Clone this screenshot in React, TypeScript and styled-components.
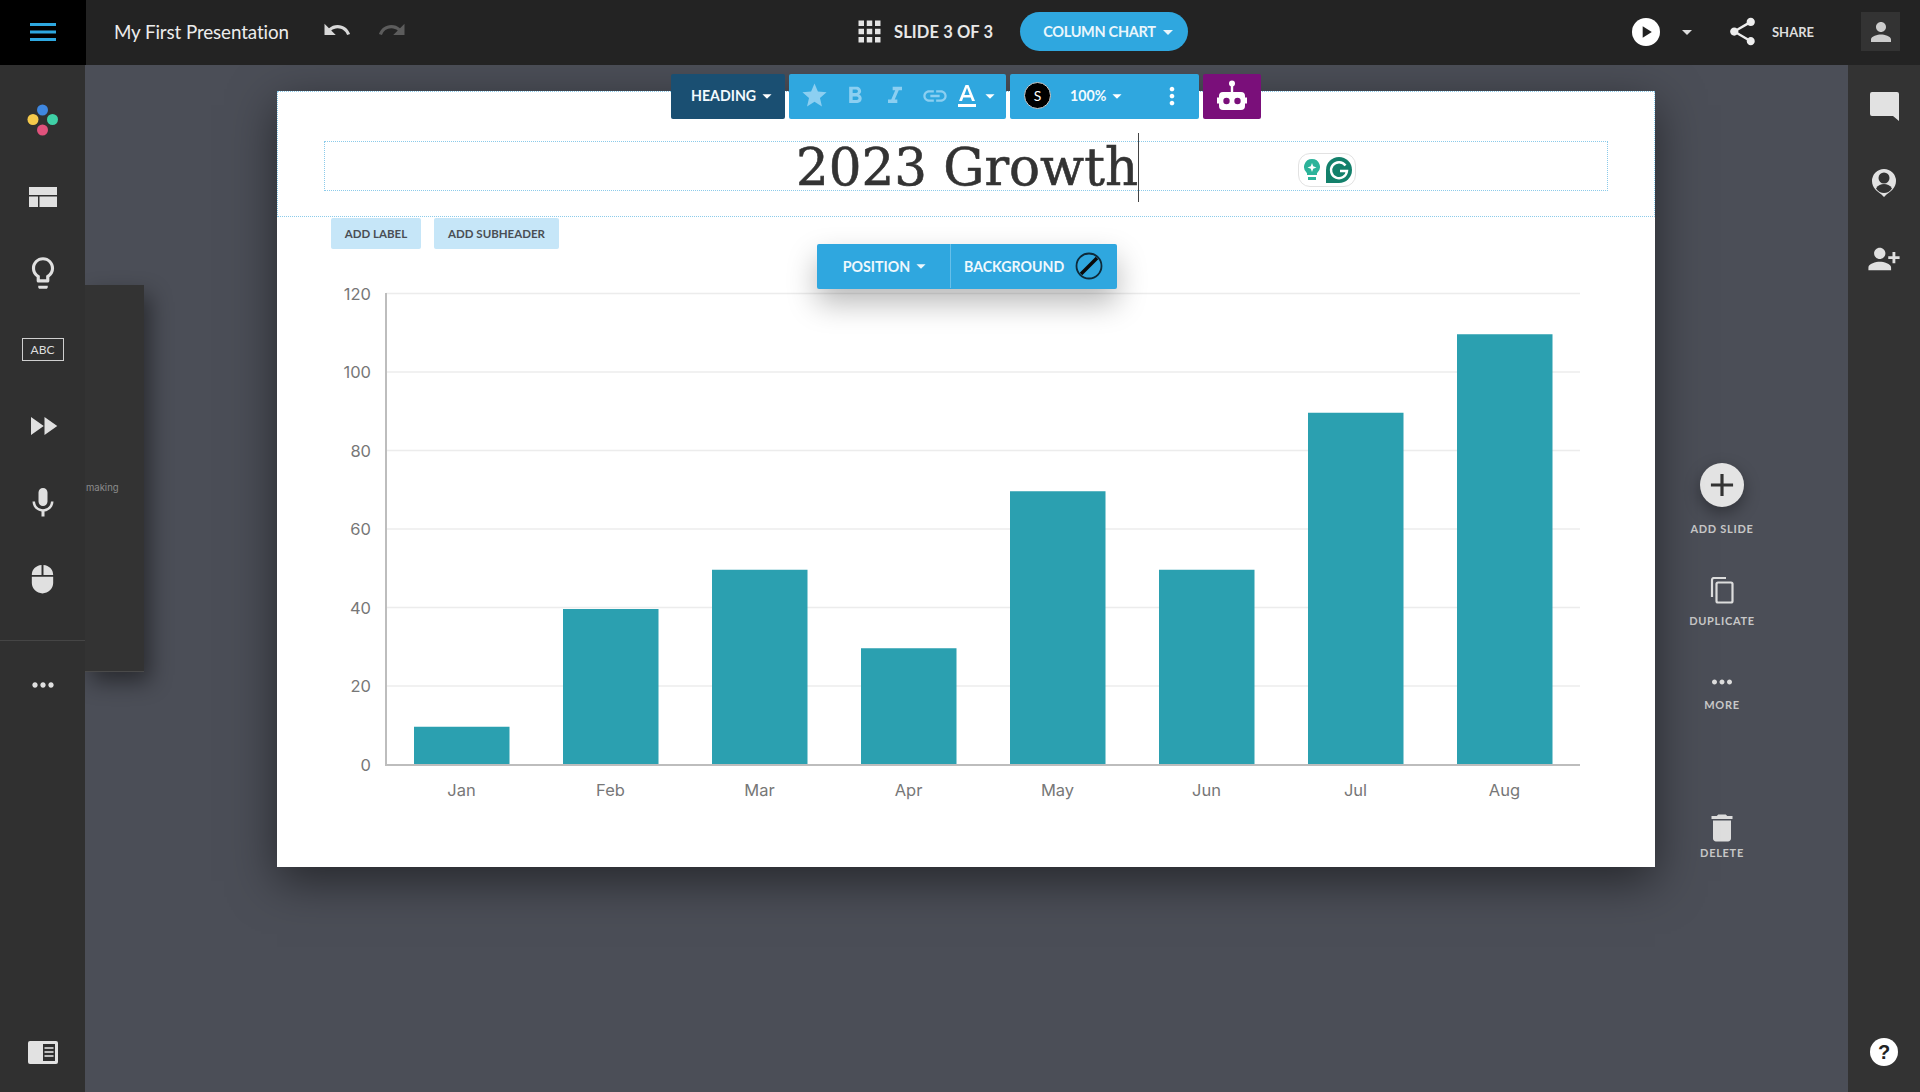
import React from "react";
import styled, { createGlobalStyle } from "styled-components";
import {
  MdUndo, MdRedo, MdApps, MdShare, MdPerson, MdPersonAdd, MdDelete, MdLightbulbOutline,
  MdFastForward, MdMic, MdMoreHoriz, MdAdd, MdStar, MdFormatBold, MdFormatItalic, MdLink,
  MdMoreVert, MdPlayArrow, MdArrowDropDown,
} from "react-icons/md";

const Global = createGlobalStyle`
  html, body { margin: 0; padding: 0; height: 100%; background: #4b4e57; }
  * { box-sizing: border-box; }
  #root { height: 100%; }
`;

const UI_FONT = `"Lato", "Noto Sans", sans-serif`;
const BLUE = "#2fa7df";
const DOTTED = "#8ccbea";

const Page = styled.div`
  width: 1920px; height: 1092px; overflow: hidden;
  display: grid; grid-template-rows: 65px 1fr; grid-template-columns: 86px 1fr 72px;
  font-family: ${UI_FONT}; background: #4b4e57;
`;

const Header = styled.header`
  grid-column: 1 / -1; display: grid; grid-template-columns: 853px auto 1fr;
  align-items: center; background: #232323; color: #fff; position: relative; z-index: 5;
`;
const HeaderLeft = styled.div` display: flex; align-items: center; height: 65px; `;
const BurgerCell = styled.div`
  width: 86px; height: 65px; background: #000; display: flex; align-items: center; justify-content: center; padding-bottom: 1px;
`;
const DocTitle = styled.div` font-size: 18.8px; margin: 0 0 2px 28px; color: #ececec; width: 208px; white-space: nowrap; letter-spacing: -.1px; `;
const HistoryIcon = styled.span<{ $off?: boolean }>`
  display: flex; margin-right: 25px; margin-bottom: 6px; font-size: 30px; color: ${p => (p.$off ? "#5c5c5c" : "#d8d8d8")};
`;
const HeaderCenter = styled.div` display: flex; align-items: center; margin-bottom: 2px; `;
const SlideCount = styled.div` font-size: 16.5px; font-weight: 700; margin: 0 27px 0 8px; color: #e8e8e8; white-space: nowrap; letter-spacing: .1px; `;
const GridIcon = styled.span` display: flex; font-size: 33px; color: #e4e4e4; `;
const Pill = styled.div`
  height: 39px; width: 168px; border-radius: 20px; background: ${BLUE}; display: flex; align-items: center;
  font-size: 14.5px; font-weight: 700; color: #eaf6fc; white-space: nowrap; padding-left: 23px; letter-spacing: -.3px;
`;
const HeaderRight = styled.div` display: flex; align-items: center; justify-content: flex-end; padding-right: 20px; margin-bottom: 2px; `;
const PlayButton = styled.div`
  width: 28px; height: 28px; border-radius: 50%; background: #fff; color: #222; display: flex; align-items: center; justify-content: center; font-size: 20px;
`;
const HeaderCaret = styled.span` display: flex; font-size: 24px; color: #ddd; margin: 0 27px 0 15px; `;
const ShareIcon = styled.span` display: flex; font-size: 33px; color: #eee; `;
const ShareLabel = styled.span` font-size: 13px; font-weight: 700; color: #ddd; margin: 0 47px 0 13px; `;
const UserBox = styled.div`
  width: 39px; height: 39px; background: #333; display: flex; align-items: center; justify-content: center; font-size: 30px; color: #ccc;
`;

const LeftBar = styled.nav`
  background: #303030; width: 85px; display: flex; flex-direction: column; align-items: stretch; padding-top: 17px; position: relative; z-index: 4;
`;
const RailItem = styled.div`
  height: 76.5px; display: flex; align-items: center; justify-content: center; color: #e0e0e0; font-size: 34px;
`;
const RailDivider = styled.div` height: 1px; background: #454545; margin-top: 22.5px; `;
const DotsItem = styled.div` height: 44px; margin-top: 22px; display: flex; align-items: center; justify-content: center; color: #e0e0e0; font-size: 32px; `;
const PanelToggle = styled.div` margin-top: auto; height: 51px; display: flex; align-items: flex-start; justify-content: center; `;
const AbcBox = styled.div`
  width: 42px; height: 23px; border: 1.5px solid #cfcfcf; font-size: 12px; color: #ddd; display: flex; align-items: center; justify-content: center; font-weight: 400;
`;

const Canvas = styled.main`
  position: relative; display: grid; grid-template-columns: 191px 1378px 134px; align-content: start; padding-top: 26px;
`;
const FlyPanel = styled.aside`
  position: absolute; left: -1px; top: 220px; width: 59px; height: 387px; background: #333; overflow: hidden; border-bottom: 1px solid #4a4a4a;
  box-shadow: 6px 10px 22px rgba(0,0,0,.45); padding-top: 197px; z-index: 3;
`;
const FlyText = styled.div` font-size: 9.5px; color: #8c8c8c; margin-left: 1px; font-family: "Inter", sans-serif; `;

const Slide = styled.section`
  grid-column: 2; width: 1378px; height: 776px; background: #fff; position: relative; display: flex; flex-direction: column;
  box-shadow: 0 14px 44px rgba(0,0,0,.5);
`;
const SlideHeader = styled.div`
  height: 126px; padding: 49px 46px 0; border: 1px dotted ${DOTTED};
`;
const TitleBox = styled.div`
  height: 50px; border: 1px dotted ${DOTTED}; display: flex; justify-content: center; align-items: center; position: relative;
`;
const TitleText = styled.h1`
  margin: 0 0 -1px 2px; position: relative; font-family: "DejaVu Serif", serif; font-weight: 400; font-size: 51.5px; color: #333; line-height: 50px; white-space: nowrap;
  -webkit-text-stroke: 0.6px #333;
`;
const Caret = styled.i` position: absolute; right: -1px; top: -9px; height: 69px; width: 1px; background: #444; `;
const GrammarlyBadge = styled.div`
  position: absolute; left: 973px; top: 11px; width: 58px; height: 34px; border: 1px solid #e2e2e2; border-radius: 12px; background: #fff;
  display: flex; align-items: center; justify-content: center; gap: 5px;
`;
const AddRow = styled.div` display: flex; gap: 13px; padding-left: 54px; height: 31px; margin-top: 1px; `;
const AddButton = styled.div<{ $w: number }>`
  width: ${p => p.$w}px; height: 31px; background: #c6e6f8; border-radius: 2px; display: flex; align-items: center; justify-content: center;
  font-size: 11.5px; font-weight: 700; color: #4a4f55; white-space: nowrap;
`;
const TextBar = styled.div`
  position: absolute; left: 394px; top: -17px; display: flex; gap: 4px; height: 45px; z-index: 2;
`;
const BarGroup = styled.div<{ $w: number; $bg?: string; $pl?: number }>`
  width: ${p => p.$w}px; height: 45px; background: ${p => p.$bg || BLUE}; border-radius: 2px; display: flex; align-items: center; color: #fff;
  font-size: 14.2px; font-weight: 700; white-space: nowrap; padding: 0 0 2px ${p => p.$pl || 0}px;
`;
const ToolIcon = styled.span<{ $dim?: boolean; $w?: number; $push?: boolean }>`
  display: flex; align-items: center; justify-content: center; width: ${p => p.$w || 40}px; font-size: 25px; color: ${p => (p.$dim ? "#8ccff1" : "#fff")};
  margin-left: ${p => (p.$push ? "auto" : "0")};
`;
const SmallCaret = styled.span` display: flex; font-size: 22px; margin-left: 0; `;
const FontBadge = styled.span`
  width: 27px; height: 27px; border-radius: 50%; background: #000; border: 1px solid #ccc; color: #fff; display: flex; align-items: center; justify-content: center;
  font-size: 14px; font-weight: 400; margin-left: 14px; margin-right: 19px;
`;
const BarLabel = styled.span<{ $pl?: number }>` padding-left: ${p => p.$pl || 0}px; display: flex; align-items: center; color: #f2fafe; `;

const PositionBar = styled.div`
  position: absolute; left: 540px; top: 153px; width: 300px; height: 45px; background: ${BLUE}; border-radius: 2px; display: flex; z-index: 2; color: #eef8fd;
  font-size: 14.2px; font-weight: 700; box-shadow: 0 14px 30px rgba(0,0,0,.28); padding-bottom: 1px;
`;
const PositionCell = styled.div` width: 134px; border-right: 1px solid #67bfe9; display: flex; align-items: center; justify-content: center; padding-left: 8px; `;
const BackgroundCell = styled.div` flex: 1; display: flex; align-items: center; padding-left: 13px; justify-content: space-between; padding-right: 14px; `;

const ChartSvg = styled.svg` display: block; width: 1378px; height: 587px; `;
const Grid = styled.line` stroke: #ececec; stroke-width: 1.5; `;
const Axis = styled.line` stroke: #bdbdbd; stroke-width: 2; `;
const Bar = styled.rect` fill: #2ba0b0; `;
const AxisText = styled.text` font-family: "Inter", "Lato", sans-serif; font-size: 16.5px; fill: #777; font-weight: 400; `;

const RightActions = styled.div`
  grid-column: 3; display: flex; flex-direction: column; align-items: center; padding-top: 372px; color: #ddd;
`;
const AddCircle = styled.div`
  width: 44px; height: 44px; border-radius: 50%; background: #e4e4e4; display: flex; align-items: center; justify-content: center; color: #333; font-size: 38px;
  box-shadow: 0 6px 16px rgba(0,0,0,.35);
`;
const ActionIcon = styled.div<{ $mt: number; $size?: number }>` display: flex; font-size: ${p => p.$size || 30}px; color: #ddd; margin-top: ${p => p.$mt}px; height: 30px; align-items: center; `;
const ActionLabel = styled.div<{ $mt: number }>`
  font-size: 11px; letter-spacing: .7px; color: #c8c8c8; font-weight: 700; margin-top: ${p => p.$mt}px; line-height: 14px; white-space: nowrap;
`;

const RightBar = styled.aside`
  background: #333; display: flex; flex-direction: column; align-items: center; padding-top: 3px; color: #e0e0e0; font-size: 34px; position: relative; z-index: 4;
`;
const RightItem = styled.div` height: 76.5px; display: flex; align-items: center; justify-content: center; `;
const FlippedIcon = styled.span` display: flex; transform: scaleX(-1); `;
const HelpIcon = styled.div`
  margin-top: auto; margin-bottom: 26px; width: 28px; height: 28px; border-radius: 50%; background: #fff; color: #222; font-size: 20px; font-weight: 700;
  display: flex; align-items: center; justify-content: center; font-family: "Liberation Sans", sans-serif;
`;

const Burger = () => (
  <svg width="26" height="20" viewBox="0 0 26 20"><g fill="#2ea8e0"><rect y="1" width="26" height="3" /><rect y="8.5" width="26" height="3" /><rect y="16" width="26" height="3" /></g></svg>
);
const ThemeDots = () => (
  <svg width="32" height="32" viewBox="0 0 32 32">
    <circle cx="15.5" cy="6" r="5.5" fill="#3f87e0" /><circle cx="6" cy="15.5" r="5.5" fill="#f5c94b" />
    <circle cx="25.5" cy="15.5" r="5.5" fill="#3fd0a6" /><circle cx="15.5" cy="26" r="5.5" fill="#e0527c" />
  </svg>
);
const LayoutIcon = () => (
  <svg width="28" height="20" viewBox="0 0 28 20"><g fill="#e0e0e0"><rect width="28" height="8" /><rect y="9.5" width="9" height="10.5" /><rect x="10.5" y="9.5" width="17.5" height="10.5" /></g></svg>
);
const MouseIcon = () => (
  <svg width="23" height="30" viewBox="0 0 28 36" fill="#e0e0e0">
    <path d="M12.8 1C6 1.5 1 6.5 1 13h11.8zM15.2 1V13H27c0-6.500-5-11.500-11.800-12zM1 15.200V23c0 7 6 12.500 13 12.500S27 30 27 23v-7.800z" />
  </svg>
);
const PanelIcon = () => (
  <svg width="30" height="23" viewBox="0 0 30 23">
    <rect width="30" height="23" rx="2" fill="#e2e2e2" />
    <rect x="15" y="3" width="12" height="17" fill="#303030" />
    <g fill="#bdbdbd"><rect x="16.500" y="6" width="9" height="2" /><rect x="16.500" y="10" width="9" height="2" /><rect x="16.500" y="14" width="9" height="2" /></g>
  </svg>
);
const ChatIcon = () => (
  <svg width="29" height="29" viewBox="0 0 29 29"><path d="M2 0h25a2 2 0 0 1 2 2v27l-6-5H2a2 2 0 0 1-2-2V2a2 2 0 0 1 2-2z" fill="#e2e2e2" /></svg>
);
const PinUserIcon = () => (
  <svg width="26" height="30" viewBox="0 0 26 30">
    <path fill="#e2e2e2" d="M13 1a12 12 0 0 1 12 12c0 7-6 11-9.500 13.500L13 29l-2.500-2.500C7 24 1 20 1 13A12 12 0 0 1 13 1z" />
    <circle cx="13" cy="10" r="5.500" fill="#333" />
    <path d="M5 20.500c2-3.500 5-4.500 8-4.500s6 1 8 4.500c-2 3-5 4.500-8 4.500s-6-1.500-8-4.500z" fill="#333" />
  </svg>
);
const DuplicateIcon = () => (
  <svg width="24" height="27" viewBox="0 0 24 27" fill="none" stroke="#ddd" strokeWidth="2.200">
    <rect x="6.500" y="5.500" width="16" height="20" rx="1.500" />
    <path d="M2 20V3a2 2 0 0 1 2-2h12" />
  </svg>
);
const RobotIcon = () => (
  <svg width="30" height="32" viewBox="0 0 30 32" fill="#fff">
    <circle cx="15" cy="3.500" r="3" /><rect x="13.800" y="5" width="2.400" height="7" />
    <path d="M6 12h18a4 4 0 0 1 4 4v1.500h2v6h-2V26a4 4 0 0 1-4 4H6a4 4 0 0 1-4-4v-2.500H0v-6h2V16a4 4 0 0 1 4-4z" />
    <circle cx="9.500" cy="21" r="3.200" fill="#7a0f7a" /><circle cx="20.500" cy="21" r="3.200" fill="#7a0f7a" />
  </svg>
);
const TextColorIcon = () => (
  <svg width="18" height="24" viewBox="0 0 18 24" fill="#fff">
    <path d="M7.500 1h3L17 17h-3l-1.300-3.500H5.300L4 17H1zM6.300 11h5.400L9 3.800z" /><rect x="0" y="20" width="18" height="3" />
  </svg>
);
const NoFillIcon = () => (
  <svg width="28" height="28" viewBox="0 0 28 28"><circle cx="14" cy="14" r="12.500" fill="none" stroke="#0e2a3a" strokeWidth="1.800" /><line x1="6" y1="22" x2="22" y2="6" stroke="#0a0a0a" strokeWidth="3.500" /></svg>
);
const BulbBadge = () => (
  <svg width="18" height="24" viewBox="0 0 18 24">
    <path fill="#2cb39a" d="M9 1a8 8 0 0 1 5 14.200V17H4v-1.800A8 8 0 0 1 9 1zM5 19h8v3H5z" />
    <path fill="#fff" d="M9 5l1.200 3.300L13.500 9.500l-3.300 1.200L9 14l-1.200-3.300L4.500 9.500l3.300-1.200z" />
  </svg>
);
const GBadge = () => (
  <svg width="26" height="26" viewBox="0 0 26 26">
    <path fill="#13806b" d="M13 0a13 13 0 0 1 0 26H0V13A13 13 0 0 1 13 0z" />
    <path fill="none" stroke="#fff" strokeWidth="2.400" d="M19.500 8.500A8 8 0 1 0 21 14h-7" />
  </svg>
);

const months = ["Jan", "Feb", "Mar", "Apr", "May", "Jun", "Jul", "Aug"];
const values = [10, 40, 50, 30, 70, 50, 90, 110];
const ticks = [0, 20, 40, 60, 80, 100, 120];
const ZERO = 515.5;
const UNIT = 3.925;

const Chart = () => (
  <ChartSvg viewBox="0 0 1378 587">
    {ticks.map(t => (
      <g key={t}>
        {t > 0 && <Grid x1={109} x2={1303} y1={ZERO - t * UNIT} y2={ZERO - t * UNIT} />}
        <AxisText x={94} y={ZERO - t * UNIT + 6} textAnchor="end">{t}</AxisText>
      </g>
    ))}
    {values.map((v, i) => (
      <Bar key={months[i]} x={137 + i * 149} width={95.5} y={ZERO - v * UNIT + 1.5} height={v * UNIT - 1.5} />
    ))}
    <Axis x1={109} x2={109} y1={44} y2={516.500} />
    <Axis x1={108} x2={1303} y1={516} y2={516} />
    {months.map((m, i) => (
      <AxisText key={m} x={184.500 + i * 149} y={547} textAnchor="middle">{m}</AxisText>
    ))}
  </ChartSvg>
);

export default function App() {
  return (
    <>
      <Global />
      <Page>
        <Header>
          <HeaderLeft>
            <BurgerCell><Burger /></BurgerCell>
            <DocTitle>My First Presentation</DocTitle>
            <HistoryIcon><MdUndo /></HistoryIcon>
            <HistoryIcon $off><MdRedo /></HistoryIcon>
          </HeaderLeft>
          <HeaderCenter>
            <GridIcon><MdApps /></GridIcon>
            <SlideCount>SLIDE 3 OF 3</SlideCount>
            <Pill>COLUMN CHART<MdArrowDropDown size={24} /></Pill>
          </HeaderCenter>
          <HeaderRight>
            <PlayButton><MdPlayArrow /></PlayButton>
            <HeaderCaret><MdArrowDropDown /></HeaderCaret>
            <ShareIcon><MdShare /></ShareIcon>
            <ShareLabel>SHARE</ShareLabel>
            <UserBox><MdPerson /></UserBox>
          </HeaderRight>
        </Header>

        <LeftBar>
          <RailItem><ThemeDots /></RailItem>
          <RailItem><LayoutIcon /></RailItem>
          <RailItem><MdLightbulbOutline size={38} /></RailItem>
          <RailItem><AbcBox>ABC</AbcBox></RailItem>
          <RailItem><MdFastForward size={36} /></RailItem>
          <RailItem><MdMic size={36} /></RailItem>
          <RailItem><MouseIcon /></RailItem>
          <RailDivider />
          <DotsItem><MdMoreHoriz /></DotsItem>
          <PanelToggle><PanelIcon /></PanelToggle>
        </LeftBar>

        <Canvas>
          <FlyPanel><FlyText>making</FlyText></FlyPanel>
          <Slide>
            <TextBar>
              <BarGroup $w={114} $bg="#1a4f72">
                <BarLabel $pl={20}>HEADING</BarLabel><SmallCaret><MdArrowDropDown /></SmallCaret>
              </BarGroup>
              <BarGroup $w={217} $pl={4}>
                <ToolIcon $dim $w={42}><MdStar size={29} /></ToolIcon>
                <ToolIcon $dim><MdFormatBold size={28} /></ToolIcon>
                <ToolIcon $dim><MdFormatItalic size={28} /></ToolIcon>
                <ToolIcon $dim><MdLink size={28} /></ToolIcon>
                <ToolIcon $w={24}><TextColorIcon /></ToolIcon><SmallCaret><MdArrowDropDown /></SmallCaret>
              </BarGroup>
              <BarGroup $w={189}>
                <FontBadge>S</FontBadge>
                <BarLabel>100%</BarLabel><SmallCaret><MdArrowDropDown /></SmallCaret>
                <ToolIcon $w={54} $push><MdMoreVert size={28} /></ToolIcon>
              </BarGroup>
              <BarGroup $w={58} $bg="#7a0f7a"><ToolIcon $w={58}><RobotIcon /></ToolIcon></BarGroup>
            </TextBar>
            <SlideHeader>
              <TitleBox>
                <TitleText>2023 Growth<Caret /></TitleText>
                <GrammarlyBadge><BulbBadge /><GBadge /></GrammarlyBadge>
              </TitleBox>
            </SlideHeader>
            <AddRow>
              <AddButton $w={90}>ADD LABEL</AddButton>
              <AddButton $w={125}>ADD SUBHEADER</AddButton>
            </AddRow>
            <PositionBar>
              <PositionCell>POSITION<MdArrowDropDown size={22} /></PositionCell>
              <BackgroundCell>BACKGROUND<NoFillIcon /></BackgroundCell>
            </PositionBar>
            <Chart />
          </Slide>
          <RightActions>
            <AddCircle><MdAdd /></AddCircle>
            <ActionLabel $mt={15}>ADD SLIDE</ActionLabel>
            <ActionIcon $mt={39}><DuplicateIcon /></ActionIcon>
            <ActionLabel $mt={9}>DUPLICATE</ActionLabel>
            <ActionIcon $mt={39}><MdMoreHoriz /></ActionIcon>
            <ActionLabel $mt={1}>MORE</ActionLabel>
            <ActionIcon $mt={101} $size={36}><MdDelete /></ActionIcon>
            <ActionLabel $mt={3}>DELETE</ActionLabel>
          </RightActions>
        </Canvas>

        <RightBar>
          <RightItem><ChatIcon /></RightItem>
          <RightItem><PinUserIcon /></RightItem>
          <RightItem><FlippedIcon><MdPersonAdd /></FlippedIcon></RightItem>
          <HelpIcon>?</HelpIcon>
        </RightBar>
      </Page>
    </>
  );
}
